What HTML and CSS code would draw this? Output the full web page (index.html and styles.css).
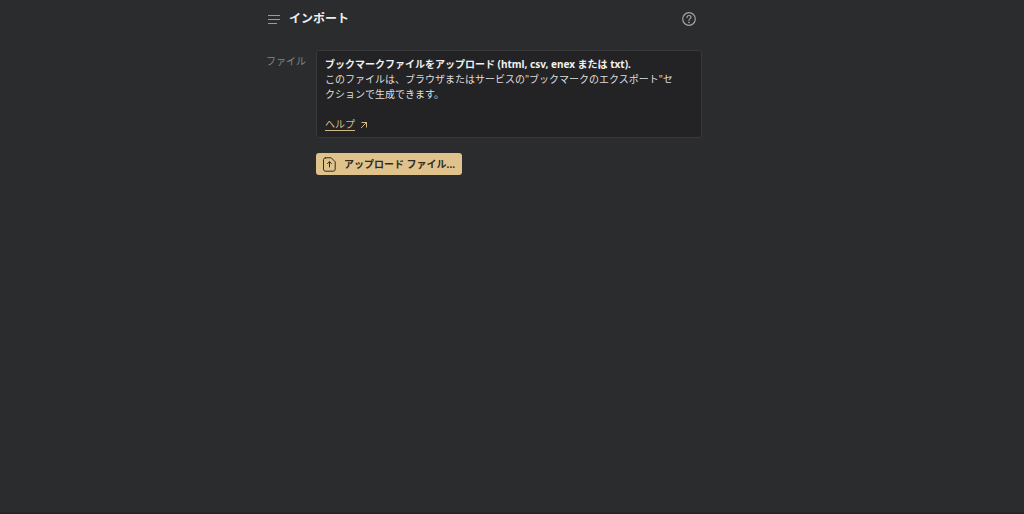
FILE: index.html
```html
<!DOCTYPE html>
<html lang="ja">
<head>
<meta charset="utf-8">
<meta name="viewport" content="width=device-width, initial-scale=1">
<title>インポート</title>
<link rel="stylesheet" href="styles.css">
</head>
<body>
<main class="page">
  <header class="header">
    <button class="icon-button" type="button" aria-label="メニュー">
      <svg width="14" height="14" viewBox="0 0 14 14" fill="none" stroke="currentColor"><path d="M1 2.5h12M1 6.5h12M1 10.5h9"/></svg>
    </button>
    <h1 class="title">インポート</h1>
    <a class="help-icon" href="#help" aria-label="ヘルプ">
      <svg width="14" height="14" viewBox="0 0 14 14" fill="none" stroke="currentColor" stroke-width="1.2" stroke-linecap="round"><circle cx="7" cy="7" r="6.3"/><path d="M5 5.4C5 4.2 5.8 3.5 7 3.5s2 .7 2 1.8C9 6.6 7 6.7 7 8.2"/><circle cx="7" cy="10.4" r=".8" fill="currentColor" stroke="none"/></svg>
    </a>
  </header>
  <section class="form">
    <div class="label" id="file-label">ファイル</div>
    <div class="field">
      <div class="info">
        <p class="text"><b>ブックマークファイルをアップロード (html, csv, enex または txt).</b><br>このファイルは、ブラウザまたはサービスの"ブックマークのエクスポート"セ<br>クションで生成できます。</p>
        <a class="link" href="#help"><span class="link-text">ヘルプ</span><svg width="8" height="8" viewBox="0 0 8 8" fill="none" stroke="currentColor"><path d="M1 7l6-6M1.5 1.5h5v5"/></svg></a>
      </div>
      <button class="upload" type="button" aria-describedby="file-label">
        <svg width="13" height="15" viewBox="0 0 13 15" fill="none" stroke="currentColor" stroke-linecap="round" stroke-linejoin="round"><path d="M2.5.8h5.7l4 4v7.4a2 2 0 0 1-2 2H2.5a2 2 0 0 1-2-2V2.8a2 2 0 0 1 2-2zM6.5 10V4.8M4.5 6.7l2-2 2 2"/></svg>
        <span>アップロード ファイル...</span>
      </button>
    </div>
  </section>
</main>
</body>
</html>
```
FILE: styles.css
```css
* { box-sizing: border-box; }

body {
  margin: 0;
  min-height: 100vh;
  padding: 0 72px 0 16px;
  background: #2b2c2e;
  border-bottom: 2px solid #29232b;
  color: #dededf;
  font: 10px/15px "Noto Sans", "Noto Sans CJK JP", sans-serif;
}

.page {
  max-width: 436px;
  margin: 0 auto;
}

.header {
  display: flex;
  align-items: center;
  gap: 8px;
  height: 38px;
  padding: 0 6px 0 1px;
}

.icon-button {
  display: flex;
  padding: 1px 0 0;
  border: 0;
  background: none;
  color: #9b9b9d;
}

.title {
  flex: 1;
  margin: 0;
  font-size: 12px;
  font-weight: 700;
  line-height: 18px;
  color: #eeeeef;
}

.help-icon {
  display: flex;
  color: #a4a4a6;
}

.form {
  display: grid;
  grid-template-columns: 50px 1fr;
  padding-top: 12px;
}

.label {
  padding-top: 4px;
  color: #858587;
}

.field {
  display: flex;
  flex-direction: column;
  align-items: flex-start;
  gap: 15px;
}

.info {
  width: 100%;
  padding: 6px 8px 5px;
  border: 1px solid #39393b;
  border-radius: 3px;
  background: #232325;
}

.text {
  margin: 0 0 15px;
}

b {
  color: #f0f0f0;
}

.link {
  display: inline-flex;
  align-items: center;
  gap: 5px;
  color: #cfb888;
  text-decoration: none;
}

.link-text {
  text-decoration: underline;
  text-underline-offset: 2px;
}

.upload {
  display: flex;
  align-items: center;
  gap: 8px;
  padding: 4px 7px 3px;
  border: 0;
  border-radius: 3px;
  background: #dfc28c;
  color: #302b22;
  font: inherit;
  font-weight: 700;
}
```
